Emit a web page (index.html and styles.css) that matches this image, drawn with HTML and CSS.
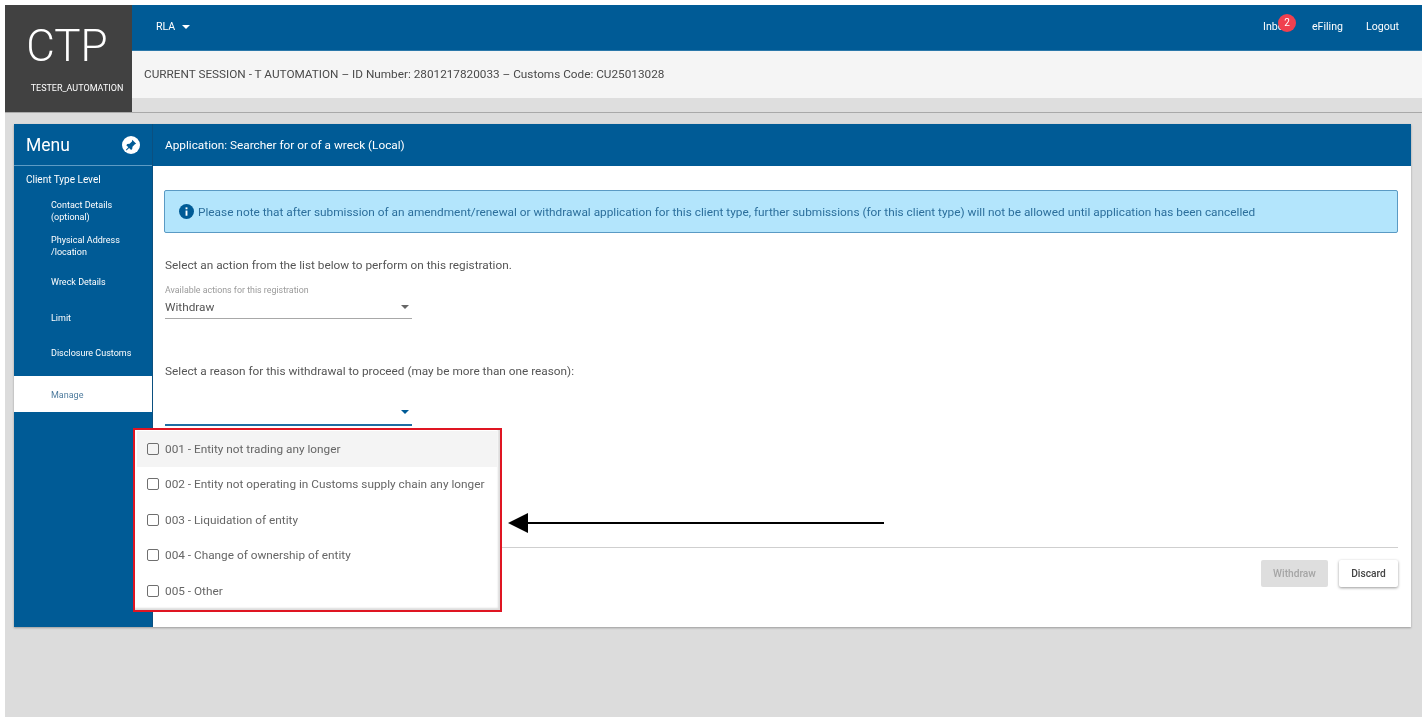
FILE: index.html
```html
<!DOCTYPE html>
<html lang="en">
<head>
<meta charset="utf-8">
<title>CTP</title>
<link rel="stylesheet" href="styles.css">
</head>
<body>
<div class="app">
  <header class="header">
    <div class="logo">
      <div class="logo-title">CTP</div>
      <div class="logo-user">TESTER_AUTOMATION</div>
    </div>
    <div class="header-right">
      <div class="topbar">
        <div class="topbar-left">RLA <span class="caret caret-white"></span></div>
        <nav class="topnav">
          <span class="inbox">Inbox<span class="badge">2</span></span>
          <span>eFiling</span>
          <span>Logout</span>
        </nav>
      </div>
      <div class="session">CURRENT SESSION - T AUTOMATION – ID Number: 2801217820033 – Customs Code: CU25013028</div>
      <div class="session-foot"></div>
    </div>
  </header>

  <section class="card">
    <aside class="sidebar">
      <div class="menu-head">
        <span class="menu-title">Menu</span>
        <svg class="pin" viewBox="0 0 18 18" width="18" height="18" aria-hidden="true">
          <circle cx="9" cy="9" r="9" fill="#fff"/>
          <path d="M10.2 3.8l4 4-1.3.5-2.4 2.4-.3 2.3-1.1 1-2-2-2.6 2.4-.6-.6 2.4-2.6-2-2 1-1.1 2.3-.3 2.4-2.4z" fill="#005b96"/>
        </svg>
      </div>
      <div class="menu-group">Client Type Level</div>
      <ul class="menu-list">
        <li class="menu-item menu-item-double">Contact Details<br>(optional)</li>
        <li class="menu-item menu-item-double menu-item-tight">Physical Address<br>/location</li>
        <li class="menu-item">Wreck Details</li>
        <li class="menu-item">Limit</li>
        <li class="menu-item">Disclosure Customs</li>
        <li class="menu-item menu-item-active">Manage</li>
      </ul>
    </aside>

    <main class="main">
      <div class="title-bar">Application: Searcher for or of a wreck (Local)</div>
      <div class="content">
        <div class="alert">
          <svg class="info" viewBox="0 0 16 16" width="15" height="15" aria-hidden="true">
            <circle cx="8" cy="8" r="8" fill="#005b96"/>
            <rect x="7" y="7" width="2" height="5.5" fill="#fff"/>
            <rect x="7" y="3.6" width="2" height="2" fill="#fff"/>
          </svg>
          <span>Please note that after submission of an amendment/renewal or withdrawal application for this client type, further submissions (for this client type) will not be allowed until application has been cancelled</span>
        </div>
        <p class="prompt prompt-action">Select an action from the list below to perform on this registration.</p>
        <div class="select">
          <div class="select-label">Available actions for this registration</div>
          <div class="select-value">Withdraw <span class="caret caret-grey"></span></div>
        </div>
        <p class="prompt prompt-reason">Select a reason for this withdrawal to proceed (may be more than one reason):</p>
        <div class="select select-open"><span class="caret caret-blue"></span></div>
      </div>
      <div class="footer">
        <button class="btn btn-disabled" type="button">Withdraw</button>
        <button class="btn btn-plain" type="button">Discard</button>
      </div>
    </main>
  </section>

  <div class="dropdown">
    <div class="option option-hover"><span class="check"></span>001 - Entity not trading any longer</div>
    <div class="option"><span class="check"></span>002 - Entity not operating in Customs supply chain any longer</div>
    <div class="option"><span class="check"></span>003 - Liquidation of entity</div>
    <div class="option"><span class="check"></span>004 - Change of ownership of entity</div>
    <div class="option"><span class="check"></span>005 - Other</div>
  </div>
  <div class="arrow"><span class="arrow-head"></span><span class="arrow-line"></span></div>
</div>
</body>
</html>
```
FILE: styles.css
```css
* { box-sizing: border-box; }
html, body { margin: 0; height: 100%; background: #fff; }
body {
  padding: 5px 4px 1px 5px;
  font-family: Roboto, "Liberation Sans", sans-serif;
  overflow: hidden;
}
.app {
  position: relative;
  height: 712px;
  background: #dcdcdc;
  display: flex;
  flex-direction: column;
  filter: blur(0.35px);
}
.header { display: flex; height: 108px; border-bottom: 1px solid #a9a9a9; }
.logo {
  width: 127px;
  background: #414141;
  color: #fff;
  text-align: center;
  flex: none;
}
.logo-title { font-size: 44px; font-weight: 300; line-height: 50px; margin-top: 16px; margin-right: 3px; }
.logo-user { font-size: 9px; line-height: 12px; margin-top: 11px; margin-left: 17px; white-space: nowrap; }
.header-right { flex: 1; display: flex; flex-direction: column; }
.topbar {
  height: 46px;
  background: #005b96;
  color: #fff;
  display: flex;
  align-items: center;
  justify-content: space-between;
  padding: 0 23px 2px 24px;
  font-size: 10.6px;
  border-bottom: 1px solid #2b78aa;
}
.topbar-left { display: flex; align-items: center; gap: 5px; }
.topnav { display: flex; gap: 23px; }
.inbox { position: relative; }
.badge {
  position: absolute;
  top: -6px;
  left: 15px;
  width: 18px;
  height: 18px;
  border-radius: 50%;
  background: #f0404f;
  color: #fff;
  text-align: center;
  font-size: 10px;
  line-height: 17px;
}
.session {
  height: 47px;
  background: #f5f5f5;
  color: #4a4a4a;
  font-size: 11.78px;
  display: flex;
  align-items: center;
  padding: 0 0 2px 12px;
}
.session-foot { flex: 1; background: #dedede; }
.caret { display: inline-block; width: 0; height: 0; border-left: 4px solid transparent; border-right: 4px solid transparent; }
.caret-white { border-top: 4px solid #fff; margin-left: 2px; margin-top: 1px; }
.caret-grey { border-top: 4px solid #666; }
.caret-blue { border-top: 4px solid #005b96; }

.card {
  display: flex;
  margin: 11px 11px 0 9px;
  height: 503px;
  background: #fff;
  box-shadow: 0 1px 2px rgba(0,0,0,.3);
}
.sidebar {
  width: 139px;
  flex: none;
  background: #005b96;
  color: #fff;
  border-right: 1px solid #0b5080;
}
.menu-head {
  height: 42px;
  display: flex;
  align-items: center;
  justify-content: space-between;
  padding: 0 12px;
  border-bottom: 1px solid #5d9bc4;
}
.menu-title { font-size: 17.5px; }
.menu-group { font-size: 10px; line-height: 12px; padding: 8px 12px 0; }
.menu-list { list-style: none; margin: 6px 0 0; padding: 0; }
.menu-item {
  height: 35.5px;
  padding: 13px 0 0 37px;
  font-size: 9px;
  line-height: 12px;
}
.menu-item-double { padding-top: 7px; }
.menu-item-tight { padding-top: 6px; }
.menu-item-active {
  height: 36px;
  margin-top: 6px;
  background: #fff;
  color: #4f7c9e;
}
.main { flex: 1; display: flex; flex-direction: column; min-width: 0; }
.title-bar {
  height: 42px;
  background: #005b96;
  color: #fff;
  font-size: 11.8px;
  line-height: 42px;
  padding-left: 12px;
}
.content { flex: 1; padding: 24px 13px 0 11px; color: #555; }
.alert {
  height: 43px;
  background: #b3e5fc;
  border: 1px solid #5a9ac4;
  border-radius: 2px;
  color: #2c6f9c;
  font-size: 11.83px;
  display: flex;
  align-items: center;
  gap: 4px;
  padding-left: 14px;
}
.prompt { margin: 0; padding-left: 1px; font-size: 11.8px; line-height: 14px; }
.prompt-action { margin-top: 25px; }
.prompt-reason { margin-top: 45px; }
.select { width: 247px; margin-left: 1px; border-bottom: 1px solid #a8a8a8; }
.select-label { font-size: 8.85px; line-height: 10px; color: #9a9a9a; margin-top: 13px; }
.select-value {
  display: flex;
  justify-content: space-between;
  align-items: center;
  font-size: 11.8px;
  line-height: 14px;
  padding: 5px 3px 4px 0;
}
.select-open {
  height: 41px;
  margin-top: 7px;
  border-bottom: 2px solid #1f6da3;
  display: flex;
  justify-content: flex-end;
  align-items: flex-end;
  padding: 0 3px 10px 0;
}
.footer {
  height: 80px;
  margin-right: 13px;
  border-top: 1px solid #cfcfcf;
  display: flex;
  justify-content: flex-end;
  align-items: flex-start;
  gap: 11px;
  padding-top: 12px;
}
.btn {
  height: 27px;
  border: 0;
  border-radius: 2px;
  font: 500 10.2px Roboto, "Liberation Sans", sans-serif;
  padding: 0;
}
.btn-disabled { width: 67px; background: #dedede; color: #a5a5a5; }
.btn-plain { width: 59px; background: #fff; color: #444; box-shadow: 0 1px 3px rgba(0,0,0,.4); }

.dropdown {
  position: absolute;
  left: 128px;
  top: 423px;
  width: 369px;
  height: 184px;
  background: #fff;
  border: 2px solid #df1522;
  padding: 1px 3px 1px 2px;
  box-shadow: inset -2px -2px 2px rgba(0,0,0,.14);
  color: #666;
  font-size: 11.8px;
}
.option { height: 35.5px; display: flex; align-items: center; padding-left: 10px; gap: 6px; }
.option-hover { background: #f4f4f4; }
.check { width: 12px; height: 12px; border: 1.5px solid #6f6f6f; border-radius: 2px; flex: none; }
.arrow { position: absolute; left: 503px; top: 508px; display: flex; align-items: center; height: 20px; }
.arrow-head { width: 0; height: 0; border-top: 10px solid transparent; border-bottom: 10px solid transparent; border-right: 20px solid #000; }
.arrow-line { width: 356px; height: 2px; background: #000; }
```
